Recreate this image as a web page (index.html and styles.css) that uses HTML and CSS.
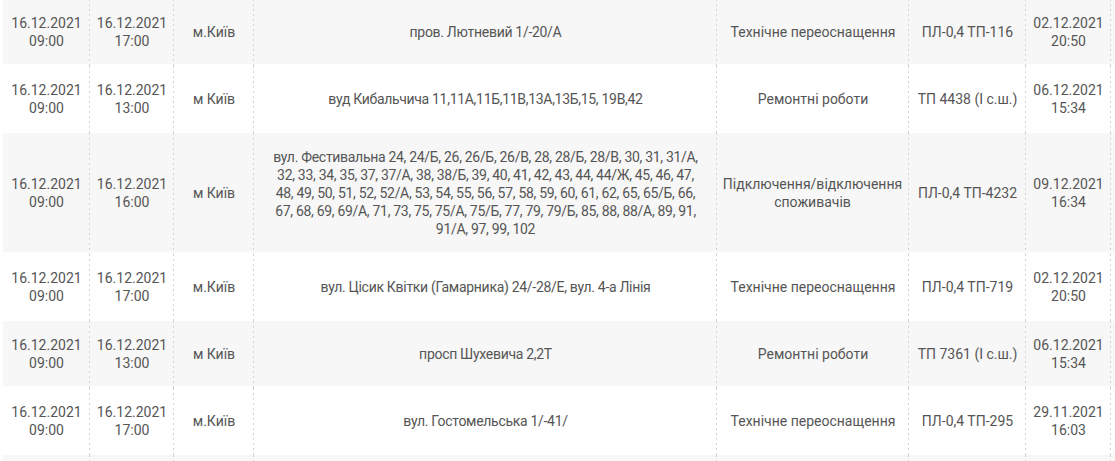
FILE: index.html
```html
<!DOCTYPE html>
<html lang="uk">
<head>
<meta charset="utf-8">
<title>Відключення</title>
<link rel="stylesheet" href="styles.css">
</head>
<body>
<div class="table">
  <div class="row shade">
    <div class="cell">16.12.2021 09:00</div>
    <div class="cell">16.12.2021 17:00</div>
    <div class="cell">м.Київ</div>
    <div class="cell addr">пров. Лютневий 1/-20/А</div>
    <div class="cell">Технічне переоснащення</div>
    <div class="cell">ПЛ-0,4 ТП-116</div>
    <div class="cell">02.12.2021 20:50</div>
    <div class="cell last"></div>
  </div>
  <div class="row">
    <div class="cell">16.12.2021 09:00</div>
    <div class="cell">16.12.2021 13:00</div>
    <div class="cell">м Київ</div>
    <div class="cell addr">вуд Кибальчича 11,11А,11Б,11В,13А,13Б,15, 19В,42</div>
    <div class="cell">Ремонтні роботи</div>
    <div class="cell">ТП 4438 (І с.ш.)</div>
    <div class="cell">06.12.2021 15:34</div>
    <div class="cell last"></div>
  </div>
  <div class="row shade">
    <div class="cell">16.12.2021 09:00</div>
    <div class="cell">16.12.2021 16:00</div>
    <div class="cell">м Київ</div>
    <div class="cell addr">вул. Фестивальна 24, 24/Б, 26, 26/Б, 26/В, 28, 28/Б, 28/В, 30, 31, 31/А,<br> 32, 33, 34, 35, 37, 37/А, 38, 38/Б, 39, 40, 41, 42, 43, 44, 44/Ж, 45, 46, 47,<br>48, 49, 50, 51, 52, 52/А, 53, 54, 55, 56, 57, 58, 59, 60, 61, 62, 65, 65/Б, 66,<br>67, 68, 69, 69/А, 71, 73, 75, 75/А, 75/Б, 77, 79, 79/Б, 85, 88, 88/А, 89, 91,<br>91/А, 97, 99, 102</div>
    <div class="cell tight"><span class="txt"><span class="nobreak">Підключення/відключення</span> споживачів</span></div>
    <div class="cell">ПЛ-0,4 ТП-4232</div>
    <div class="cell">09.12.2021 16:34</div>
    <div class="cell last"></div>
  </div>
  <div class="row">
    <div class="cell">16.12.2021 09:00</div>
    <div class="cell">16.12.2021 17:00</div>
    <div class="cell">м.Київ</div>
    <div class="cell addr">вул. Цісик Квітки (Гамарника) 24/-28/Е, вул. 4-а Лінія</div>
    <div class="cell">Технічне переоснащення</div>
    <div class="cell">ПЛ-0,4 ТП-719</div>
    <div class="cell">02.12.2021 20:50</div>
    <div class="cell last"></div>
  </div>
  <div class="row shade">
    <div class="cell">16.12.2021 09:00</div>
    <div class="cell">16.12.2021 13:00</div>
    <div class="cell">м Київ</div>
    <div class="cell addr">просп Шухевича 2,2Т</div>
    <div class="cell">Ремонтні роботи</div>
    <div class="cell">ТП 7361 (І с.ш.)</div>
    <div class="cell">06.12.2021 15:34</div>
    <div class="cell last"></div>
  </div>
  <div class="row">
    <div class="cell">16.12.2021 09:00</div>
    <div class="cell">16.12.2021 17:00</div>
    <div class="cell">м.Київ</div>
    <div class="cell addr">вул. Гостомельська 1/-41/</div>
    <div class="cell">Технічне переоснащення</div>
    <div class="cell">ПЛ-0,4 ТП-295</div>
    <div class="cell">29.11.2021 16:03</div>
    <div class="cell last"></div>
  </div>
  <div class="row shade empty">
    <div class="cell"></div>
    <div class="cell"></div>
    <div class="cell"></div>
    <div class="cell addr"></div>
    <div class="cell"></div>
    <div class="cell"></div>
    <div class="cell"></div>
    <div class="cell last"></div>
  </div>
</div>
</body>
</html>
```

FILE: styles.css
```css
html, body {
  margin: 0;
  padding: 0;
  background: #ffffff;
  overflow: hidden;
}

body {
  padding-left: 3px;
  font-family: Roboto, "Liberation Sans", Arial, sans-serif;
  font-size: 14px;
  line-height: 18px;
  color: #555555;
}

.table {
  width: 1220px;
  margin-top: -1px;
}

.row {
  display: grid;
  grid-template-columns: 87px 84px 80px 463px 192px 117px 85px 112px;
  background: #ffffff;
}

.row.shade {
  background: linear-gradient(#f7f7f7, #f7f7f7) no-repeat 0 0 / 100% calc(100% - 2px);
}

.cell {
  box-sizing: border-box;
  display: flex;
  align-items: center;
  justify-content: center;
  text-align: center;
  padding: 15px 8px 16px;
  background: repeating-linear-gradient(to bottom, #d4d4d4 0 2px, transparent 2px 5px) no-repeat right top / 1px 100%;
}

.cell.addr {
  padding-left: 4px;
  padding-right: 4px;
  white-space: nowrap;
  letter-spacing: -0.3px;
}

.cell.tight {
  padding-left: 2px;
  padding-right: 3px;
}

.nobreak {
  white-space: nowrap;
}

.cell.last {
  background: none;
}

.row.empty .cell {
  min-height: 67px;
}
```
